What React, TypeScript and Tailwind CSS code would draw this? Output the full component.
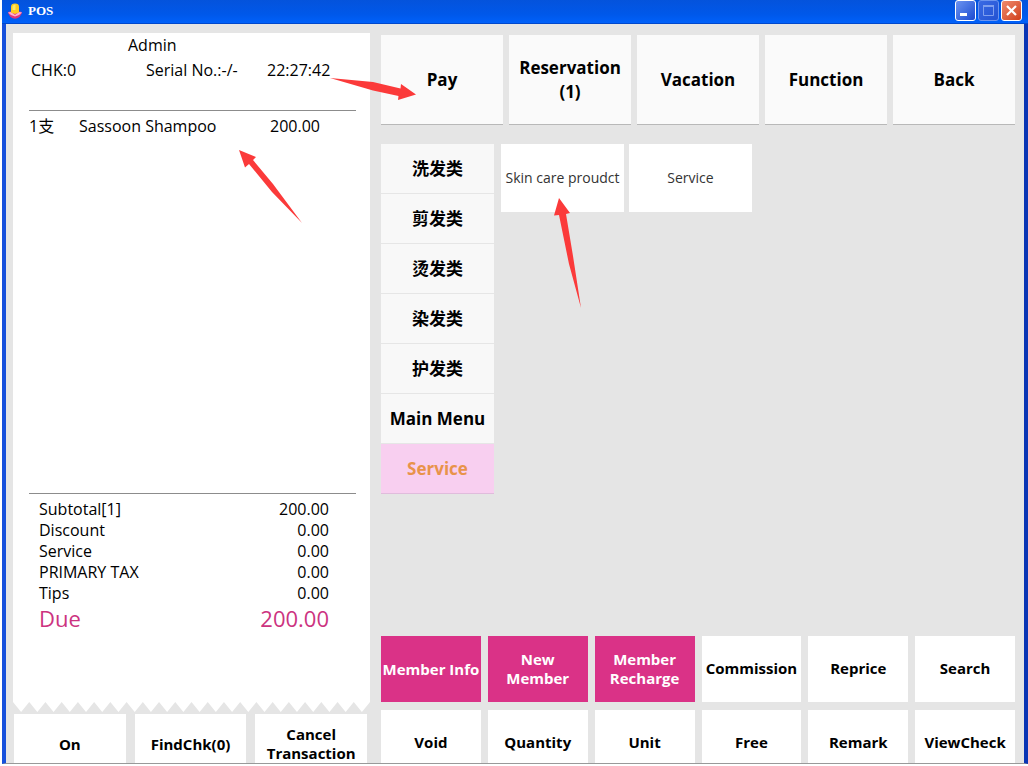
import React from "react";

const topActions = ["Pay", "Reservation (1)", "Vacation", "Function", "Back"];
const categories = ["洗发类", "剪发类", "烫发类", "染发类", "护发类", "Main Menu", "Service"];
const items = ["Skin care proudct", "Service"];
const totals: [string, string][] = [
  ["Subtotal[1]", "200.00"],
  ["Discount", "0.00"],
  ["Service", "0.00"],
  ["PRIMARY TAX", "0.00"],
  ["Tips", "0.00"],
];
const memberActions = ["Member Info", "New Member", "Member Recharge"];
const orderActions = [
  "Commission",
  "Reprice",
  "Search",
  "Void",
  "Quantity",
  "Unit",
  "Free",
  "Remark",
  "ViewCheck",
];
const checkActions = ["On", "FindChk(0)", "Cancel Transaction"];

const toothCount = 22;
const teeth = Array.from({ length: toothCount }, (_, i) => `${i * 16},0 ${i * 16 + 8},10`).join(" ");

function AppIcon() {
  return (
    <svg className="h-4 w-4" viewBox="0 0 16 16" aria-hidden="true">
      <path d="M1 10Q1 8 4 8.500H12Q15 8 15 10L12.500 14Q8 17.500 3.500 14Z" fill="#e0357c" />
      <path d="M1 9.500L4 9L8 12L12 9L15 9.500L12 12L8 13.500L4 12Z" fill="#ffb0d0" />
      <path d="M4 9.500V3.500Q4 0.500 8 0.500Q12 0.500 12 3.500V9.500L8 11Z" fill="#ffcc20" />
      <path d="M5.500 7V3.500Q6 1.500 8.500 1.500V7Z" fill="#ffe868" />
    </svg>
  );
}

function TitleBar() {
  return (
    <header className="flex h-6 shrink-0 items-center justify-between bg-linear-to-b from-[#0453dc] via-[#0058ea] via-60% to-[#0062fc] pr-1.5 pl-[5px] shadow-[inset_0_-1px_0_#0048cc]">
      <div className="flex items-center gap-[5px] pb-0.5">
        <AppIcon />
        <h1 className="font-['Liberation_Serif',serif] text-[13px] leading-4 font-bold text-white">POS</h1>
      </div>
      <div className="flex gap-0.5 pb-1">
        <button
          type="button"
          aria-label="Minimize"
          className="h-[21px] w-[21px] rounded-[3px] border border-white bg-linear-to-br from-[#6d93f0] to-[#1c48d0]"
        >
          <svg className="h-full w-full" viewBox="0 0 19 19">
            <rect x="4" y="12" width="7" height="3" fill="#fff" />
          </svg>
        </button>
        <button
          type="button"
          aria-label="Maximize"
          className="h-[21px] w-[21px] rounded-[3px] border border-[#6c94ee] bg-linear-to-br from-[#3a6ae4] to-[#2352d2]"
        >
          <svg className="h-full w-full" viewBox="0 0 19 19">
            <path d="M4.500 5V14.500H14.500V5" fill="none" stroke="#7f9fee" />
            <rect x="4" y="4" width="11" height="2" fill="#7f9fee" />
          </svg>
        </button>
        <button
          type="button"
          aria-label="Close"
          className="h-[21px] w-[21px] rounded-[3px] border border-white bg-linear-to-br from-[#ee8a6c] to-[#d03c14]"
        >
          <svg className="h-full w-full" viewBox="0 0 19 19">
            <path d="M5 5L14 14M14 5L5 14" stroke="#fff" strokeWidth="2.200" />
          </svg>
        </button>
      </div>
    </header>
  );
}

function Receipt() {
  return (
    <section className="flex flex-1 flex-col bg-white pr-3.5 pl-4 text-base leading-[21px]">
      <div className="flex h-[78px] flex-col gap-1 border-b border-[#8c8c8c] pt-0.5">
        <p className="pl-[99px]">Admin</p>
        <div className="grid grid-cols-[115px_121px_1fr] pl-0.5">
          <span>CHK:0</span>
          <span>Serial No.:-/-</span>
          <span>22:27:42</span>
        </div>
      </div>
      <div className="grid grid-cols-[50px_191px_1fr] pt-[5px]">
        <span>1支</span>
        <span>Sassoon Shampoo</span>
        <span>200.00</span>
      </div>
      <dl className="mt-auto mb-[70px] border-t border-[#8c8c8c] pt-[5px] pr-[27px] pl-2.5">
        {totals.map(([label, value]) => (
          <div key={label} className="flex justify-between">
            <dt>{label}</dt>
            <dd>{value}</dd>
          </div>
        ))}
        <div className="flex justify-between text-[22px] leading-7 text-[#cc3380]">
          <dt>Due</dt>
          <dd>200.00</dd>
        </div>
      </dl>
    </section>
  );
}

function LeftColumn() {
  return (
    <div className="-mb-[13px] flex w-[357px] shrink-0 flex-col pt-[9px]">
      <Receipt />
      <svg className="h-2.5 w-full shrink-0" viewBox="0 0 352 10" preserveAspectRatio="none" aria-hidden="true">
        <polygon points={`${teeth} 352,0`} fill="#fff" />
      </svg>
      <div className="mt-0.5 grid h-[62px] shrink-0 grid-cols-3 gap-[9px] pr-[3px] pl-px">
        {checkActions.map((label) => (
          <button key={label} type="button" className="bg-white px-2 pb-0.5 text-[15px] leading-[19px] font-bold">
            {label}
          </button>
        ))}
      </div>
    </div>
  );
}

function RightColumn() {
  return (
    <div className="-mb-[13px] flex min-w-0 flex-1 flex-col pt-[11px]">
      <div className="grid h-[90px] shrink-0 grid-cols-5 gap-1.5">
        {topActions.map((label) => (
          <button
            key={label}
            type="button"
            className="border-b border-[#b8b8b8] bg-[#fafafa] px-1 text-[17px] leading-6 font-bold"
          >
            {label}
          </button>
        ))}
      </div>
      <div className="mt-[19px] flex gap-[7px]">
        <nav className="flex w-[113px] shrink-0 flex-col">
          {categories.map((label) =>
            label === "Service" ? (
              <button
                key={label}
                type="button"
                aria-current="true"
                className="h-[50px] border-b border-[#e0bcdc] bg-[#f8cff0] text-[17px] font-bold text-[#e8934a]"
              >
                {label}
              </button>
            ) : (
              <button
                key={label}
                type="button"
                className="h-[50px] border-b border-[#e6e6e6] bg-[#f8f8f8] text-[17px] font-bold whitespace-nowrap"
              >
                {label}
              </button>
            ),
          )}
        </nav>
        <div className="flex items-start gap-[5px]">
          {items.map((label) => (
            <button key={label} type="button" className="h-[68px] w-[123px] bg-white text-sm whitespace-nowrap text-[#333333]">
              {label}
            </button>
          ))}
        </div>
      </div>
      <div className="mt-auto grid auto-rows-[66px] grid-cols-6 gap-x-[7px] gap-y-2 text-[15px] leading-[19px] font-bold">
        {memberActions.map((label) => (
          <button key={label} type="button" className="bg-[#da3287] text-white">
            {label}
          </button>
        ))}
        {orderActions.map((label) => (
          <button key={label} type="button" className="bg-white pb-0.5">
            {label}
          </button>
        ))}
      </div>
    </div>
  );
}

function Arrows() {
  return (
    <svg
      className="pointer-events-none absolute top-0 left-0 h-[320px] w-[600px]"
      viewBox="0 0 600 320"
      fill="#fb3a3a"
      aria-hidden="true"
    >
      <polygon points="330,78 373,82 400.500,88.500 401,84 416,94.500 398,100 398.500,96 373,90.500" />
      <polygon points="239,150 256,157 253,160 273,184 302,223 272,192 249,164 245,167.500" />
      <polygon points="559,198 570,213 566,214 573,256 581,308 569,264 559,215 554,215.500" />
    </svg>
  );
}

export default function App() {
  return (
    <div className="relative flex h-screen flex-col bg-white pb-0.5 pl-0.5 font-['Open_Sans','Noto_Sans_CJK_SC',sans-serif] text-black">
      <TitleBar />
      <main className="flex min-h-0 flex-1 gap-[11px] overflow-hidden border-r-4 border-b border-l-4 border-r-[#0a35b4] border-b-[#999999] border-l-[#1650dc] bg-[#e5e5e5] pr-[9px] pl-[7px]">
        <LeftColumn />
        <RightColumn />
      </main>
      <Arrows />
    </div>
  );
}
